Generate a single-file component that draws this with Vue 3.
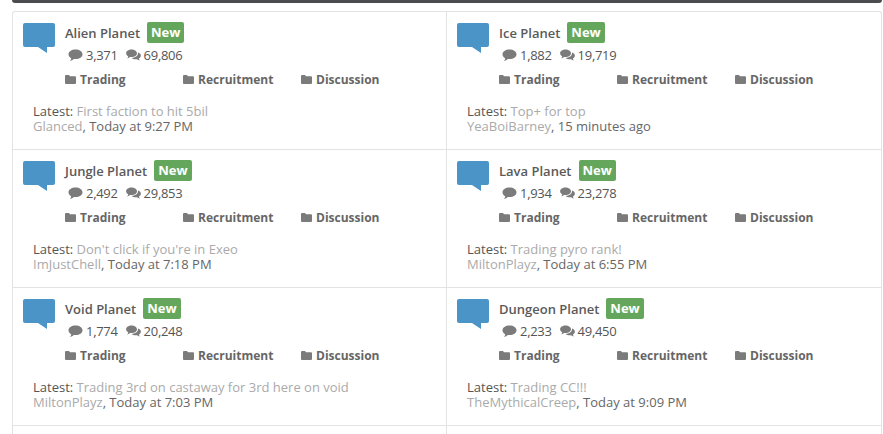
<template>
  <div class="page">
    <div class="top-bar"></div>
    <div class="forum-grid">
      <div v-for="forum in forums" :key="forum.name" class="forum-cell">
        <svg class="bubble" width="32" height="31" viewBox="0 0 32 31">
          <path d="M2 0H30Q32 0 32 2V22Q32 24 30 24H24V30L15 24H2Q0 24 0 22V2Q0 0 2 0Z" fill="#4a94c8" />
        </svg>
        <div class="forum-body">
          <div class="title-row">
            <span class="forum-name">{{ forum.name }}</span>
            <span class="new-badge">New</span>
          </div>
          <div class="stats">
            <svg class="stat-icon" width="15" height="13" viewBox="0 0 15 13">
              <path d="M7.500 0.500C11.500 0.500 14.500 2.600 14.500 5.300C14.500 8 11.500 10.100 7.500 10.100C6.900 10.100 6.400 10.100 5.900 10C4.900 11 3.600 11.700 1.900 12.100C2.700 11.200 3.100 10.200 3.200 9.200C1.500 8.300 0.500 6.900 0.500 5.300C0.500 2.600 3.500 0.500 7.500 0.500Z" fill="#7b7b7b" />
            </svg>
            <span class="stat-num">{{ forum.threads }}</span>
            <svg class="stat-icon second" width="15" height="13" viewBox="0 0 15 13">
              <path d="M5.500 0.500C8.500 0.500 11 2.200 11 4.300C11 6.400 8.500 8.100 5.500 8.100C5 8.100 4.600 8.100 4.200 8C3.400 8.700 2.500 9.100 1.300 9.400C1.800 8.700 2.100 8 2.200 7.300C1 6.600 0.100 5.500 0.100 4.300C0.100 2.200 2.500 0.500 5.500 0.500Z" fill="#7b7b7b" />
              <path d="M12 3.600C13.800 4.200 14.900 5.300 14.900 6.700C14.900 7.900 14.100 8.900 12.900 9.500C13 10.200 13.300 10.900 13.900 11.600C12.700 11.300 11.700 10.800 11 10.200C10.600 10.300 10.100 10.300 9.600 10.300C7.900 10.300 6.400 9.700 5.600 8.900C9.200 8.900 12 7 12 4.300C12 4.100 12 3.800 12 3.600Z" fill="#7b7b7b" />
            </svg>
            <span class="stat-num">{{ forum.posts }}</span>
          </div>
          <div class="sub-forums">
            <div v-for="sub in subForums" :key="sub" class="sub-forum">
              <svg width="11" height="9" viewBox="0 0 11 9">
                <path d="M1 0H4L5 1.300H10Q11 1.300 11 2.300V8Q11 9 10 9H1Q0 9 0 8V1Q0 0 1 0Z" fill="#7b7b7b" />
              </svg>
              <span>{{ sub }}</span>
            </div>
          </div>
        </div>
        <div class="latest">
          <div><span class="latest-label">Latest:</span> <span class="muted">{{ forum.thread }}</span></div>
          <div><span class="muted">{{ forum.user }}</span>, {{ forum.time }}</div>
        </div>
      </div>
      <div class="forum-cell"></div>
      <div class="forum-cell"></div>
    </div>
  </div>
</template>

<script setup>
const subForums = ['Trading', 'Recruitment', 'Discussion']

const forums = [
  { name: 'Alien Planet', threads: '3,371', posts: '69,806', thread: 'First faction to hit 5bil', user: 'Glanced', time: 'Today at 9:27 PM' },
  { name: 'Ice Planet', threads: '1,882', posts: '19,719', thread: 'Top+ for top', user: 'YeaBoiBarney', time: '15 minutes ago' },
  { name: 'Jungle Planet', threads: '2,492', posts: '29,853', thread: "Don't click if you're in Exeo", user: 'ImJustChell', time: 'Today at 7:18 PM' },
  { name: 'Lava Planet', threads: '1,934', posts: '23,278', thread: 'Trading pyro rank!', user: 'MiltonPlayz', time: 'Today at 6:55 PM' },
  { name: 'Void Planet', threads: '1,774', posts: '20,248', thread: 'Trading 3rd on castaway for 3rd here on void', user: 'MiltonPlayz', time: 'Today at 7:03 PM' },
  { name: 'Dungeon Planet', threads: '2,233', posts: '49,450', thread: 'Trading CC!!!', user: 'TheMythicalCreep', time: 'Today at 9:09 PM' }
]
</script>

<style>
html,
body {
  margin: 0;
  background: #fff;
  overflow: hidden;
}
</style>

<style scoped>
.page {
  height: 434px;
  overflow: hidden;
  padding: 0 1px 0 12px;
  font-family: "Open Sans", "Liberation Sans", sans-serif;
  font-size: 13px;
  color: #555;
}

.top-bar {
  height: 3px;
  background: #4a4d50;
  border-radius: 0 0 3px 3px;
}

.forum-grid {
  margin-top: 8px;
  display: grid;
  grid-template-columns: 434px 434px;
  grid-auto-rows: 138px;
  border: 1px solid #e3e3e3;
  border-bottom: 0;
  border-radius: 3px 3px 0 0;
  width: 870px;
  box-sizing: border-box;
}

.forum-cell {
  box-sizing: border-box;
  position: relative;
  padding: 10px 10px 0;
  border-bottom: 1px solid #e3e3e3;
}

.forum-cell:nth-child(odd) {
  border-right: 1px solid #e3e3e3;
}

.bubble {
  position: absolute;
  left: 10px;
  top: 11px;
}

.forum-body {
  margin-left: 42px;
}

.title-row {
  display: flex;
  align-items: center;
  gap: 7px;
  height: 21px;
}

.forum-name {
  font-weight: 600;
  color: #5a5a5a;
}

.new-badge {
  background: #64a75c;
  color: #fff;
  font-weight: 700;
  padding: 0 4px;
  height: 21px;
  line-height: 20px;
  border-radius: 2px;
}

.stats {
  display: flex;
  align-items: center;
  margin: 3px 0 0 3px;
  height: 18px;
  color: #555;
  letter-spacing: -0.3px;
}

.stat-icon {
  margin-right: 3px;
}

.stat-icon.second {
  margin-left: 8px;
}

.sub-forums {
  display: grid;
  grid-template-columns: 118px 118px 100px;
  margin-top: 6px;
  height: 18px;
  align-items: center;
}

.sub-forum {
  display: flex;
  align-items: center;
  gap: 4px;
  font-size: 12px;
  font-weight: 700;
  color: #666;
}

.latest {
  margin: 16px 0 0 10px;
  line-height: 15px;
  font-size: 13px;
  color: #666;
}

.latest-label {
  color: #555;
}

.muted {
  color: #aaa;
}
</style>
